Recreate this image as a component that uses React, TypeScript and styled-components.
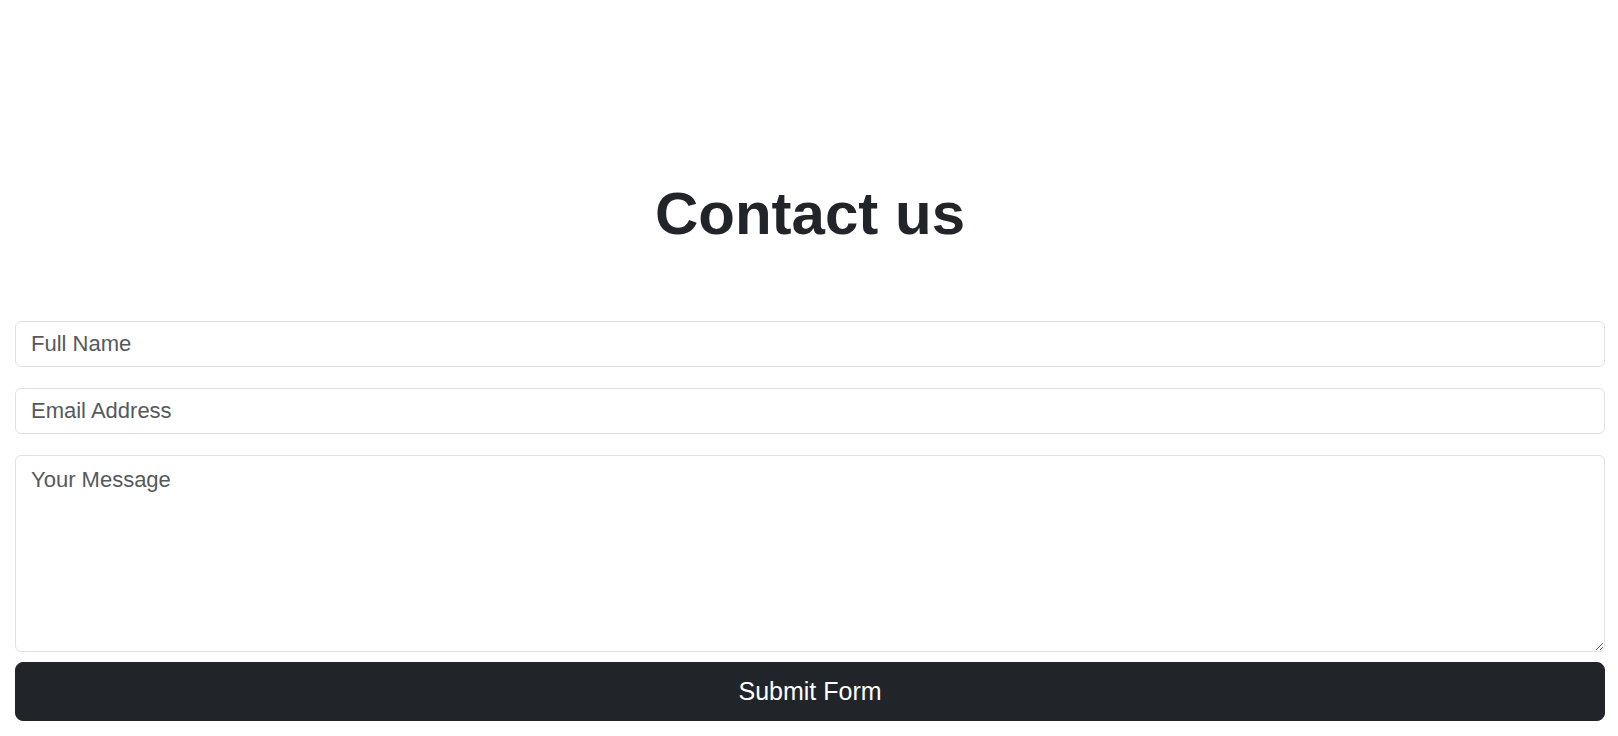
import React from "react";
import styled, { createGlobalStyle } from "styled-components";

const GlobalStyle = createGlobalStyle`
  html, body {
    margin: 0;
    padding: 0;
    background: #ffffff;
    font-family: "Liberation Sans", Arial, sans-serif;
    color: #212529;
  }
  *, *::before, *::after { box-sizing: border-box; }
`;

const Page = styled.main`
  padding: 178px 13px 0 15px;
`;

const Title = styled.h1`
  margin: 0 0 71px;
  text-align: center;
  font-size: 60px;
  line-height: 72px;
  font-weight: 700;
  color: #212529;
`;

const Form = styled.form`
  display: flex;
  flex-direction: column;
`;

const Field = styled.input`
  display: block;
  width: 100%;
  height: 46px;
  margin: 0 0 21px;
  padding: 6px 15px;
  font-family: inherit;
  font-size: 22px;
  line-height: 32px;
  color: #212529;
  background: #fff;
  border: 1px solid #dee2e6;
  border-radius: 6px;
  outline: none;
  &::placeholder { color: #55595d; opacity: 1; }
`;

const Message = styled.textarea`
  display: block;
  width: 100%;
  height: 197px;
  margin: 0 0 10px;
  padding: 7px 15px;
  font-family: inherit;
  font-size: 22px;
  line-height: 1.5;
  color: #212529;
  background: #fff;
  border: 1px solid #dee2e6;
  border-radius: 6px;
  outline: none;
  resize: vertical;
  &::placeholder { color: #55595d; opacity: 1; }
`;

const Submit = styled.button`
  display: block;
  width: 100%;
  height: 59px;
  padding: 0;
  font-family: inherit;
  font-size: 25px;
  color: #ffffff;
  background: #212529;
  border: 1px solid #212529;
  border-radius: 8px;
  cursor: pointer;
`;

export default function App() {
  return (
    <>
      <GlobalStyle />
      <Page>
        <Title>Contact us</Title>
        <Form onSubmit={(e) => e.preventDefault()}>
          <Field type="text" placeholder="Full Name" />
          <Field type="email" placeholder="Email Address" />
          <Message placeholder="Your Message" />
          <Submit type="submit">Submit Form</Submit>
        </Form>
      </Page>
    </>
  );
}
